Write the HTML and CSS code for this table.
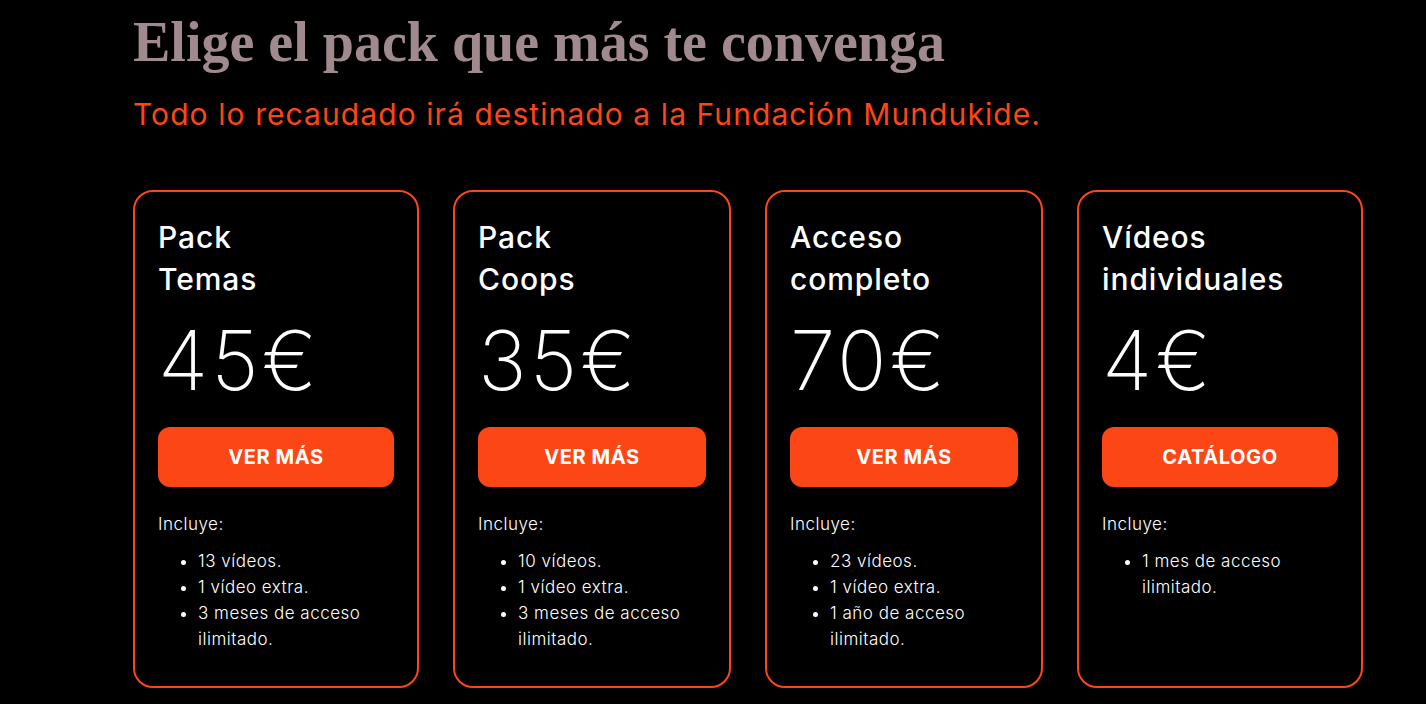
FILE: index.html
```html
<!DOCTYPE html>
<html lang="es">
<head>
<meta charset="utf-8">
<title>Packs</title>
<link rel="stylesheet" href="styles.css">
</head>
<body>
<main class="page">
  <h1 class="heading">Elige el pack que más te convenga</h1>
  <p class="lead">Todo lo recaudado irá destinado a la Fundación Mundukide.</p>
  <section class="cards">
    <article class="card">
      <h2 class="card-title">Pack<br>Temas</h2>
      <div class="price">45€</div>
      <a class="btn" href="#">VER MÁS</a>
      <p class="incl">Incluye:</p>
      <ul class="list">
        <li>13 vídeos.</li>
        <li>1 vídeo extra.</li>
        <li>3 meses de acceso ilimitado.</li>
      </ul>
    </article>
    <article class="card">
      <h2 class="card-title">Pack<br>Coops</h2>
      <div class="price">35€</div>
      <a class="btn" href="#">VER MÁS</a>
      <p class="incl">Incluye:</p>
      <ul class="list">
        <li>10 vídeos.</li>
        <li>1 vídeo extra.</li>
        <li>3 meses de acceso ilimitado.</li>
      </ul>
    </article>
    <article class="card">
      <h2 class="card-title">Acceso<br>completo</h2>
      <div class="price">70€</div>
      <a class="btn" href="#">VER MÁS</a>
      <p class="incl">Incluye:</p>
      <ul class="list">
        <li>23 vídeos.</li>
        <li>1 vídeo extra.</li>
        <li>1 año de acceso ilimitado.</li>
      </ul>
    </article>
    <article class="card">
      <h2 class="card-title">Vídeos<br>individuales</h2>
      <div class="price">4€</div>
      <a class="btn" href="#">CATÁLOGO</a>
      <p class="incl">Incluye:</p>
      <ul class="list">
        <li>1 mes de acceso ilimitado.</li>
      </ul>
    </article>
  </section>
</main>
</body>
</html>
```
FILE: styles.css
```css
html, body {
  margin: 0;
  background: #000;
}
body {
  font-family: "Inter", "DejaVu Sans", sans-serif;
  color: #fff;
}
.page {
  padding: 10px 0 0 133px;
}
.heading {
  margin: 0;
  font-family: "Liberation Serif", "DejaVu Serif", serif;
  font-weight: 700;
  font-size: 56px;
  line-height: 64px;
  color: #a08a8e;
}
.lead {
  margin: 20px 0 0;
  font-size: 30px;
  line-height: 40px;
  letter-spacing: 1.08px;
  color: #fc4616;
}
.cards {
  display: grid;
  grid-template-columns: 286px 278px 278px 286px;
  column-gap: 34px;
  margin-top: 56px;
}
.card {
  border: 2px solid #fc4616;
  border-radius: 20px;
  padding: 24px 23px 18px 23px;
  display: flex;
  flex-direction: column;
}
.card-title {
  margin: 0;
  font-size: 30px;
  line-height: 42px;
  font-weight: 500;
  letter-spacing: 0.9px;
}
.price {
  margin-top: 13px;
  font-size: 82px;
  line-height: 96px;
  font-weight: 200;
  letter-spacing: 3px;
}
.btn {
  margin-top: 18px;
  height: 60px;
  border-radius: 12px;
  background: #fc4616;
  color: #fff;
  text-decoration: none;
  font-weight: 700;
  font-size: 20px;
  letter-spacing: 0.6px;
  display: flex;
  align-items: center;
  justify-content: center;
}
.incl {
  margin: 24px 0 0;
  font-size: 17px;
  line-height: 26px;
  font-weight: 300;
  letter-spacing: 0.5px;
}
.list {
  margin: 11px 0 16px;
  padding-left: 40px;
  font-size: 17px;
  line-height: 26px;
  font-weight: 300;
  letter-spacing: 0.5px;
}
```
